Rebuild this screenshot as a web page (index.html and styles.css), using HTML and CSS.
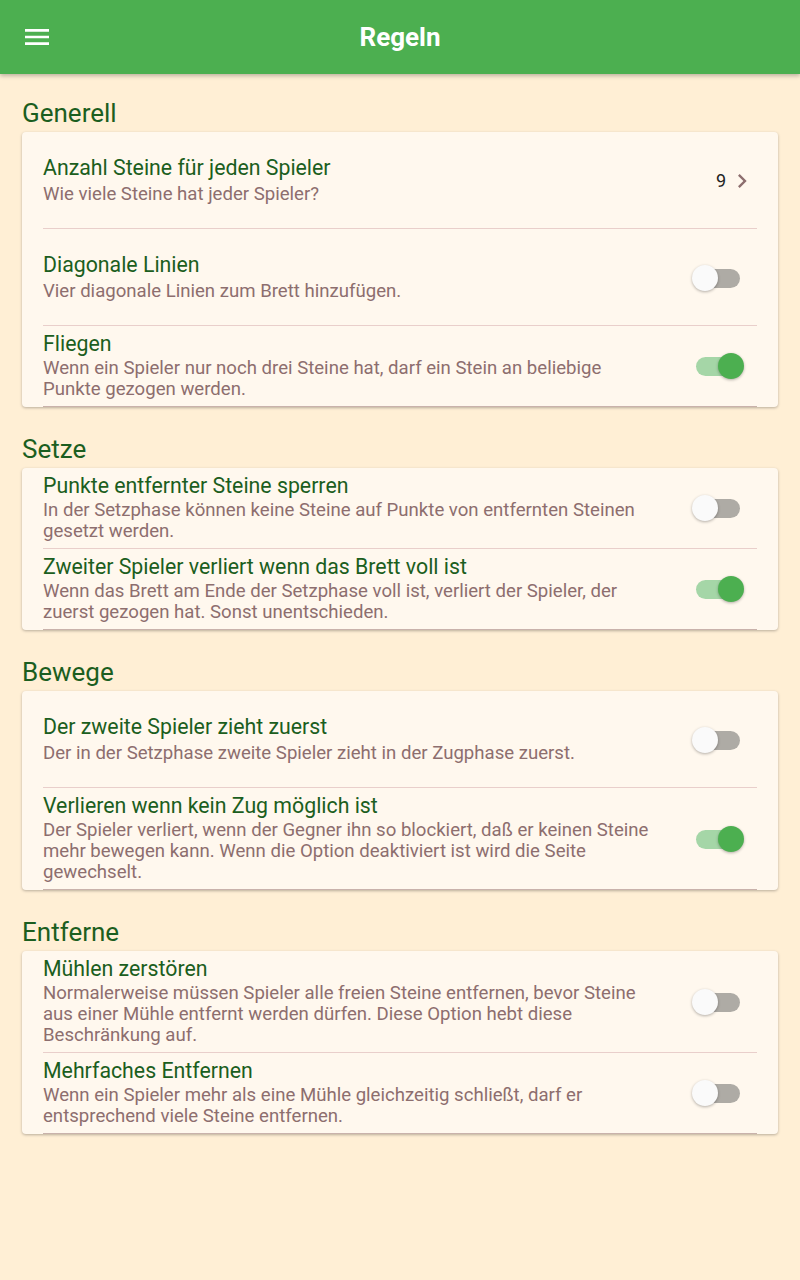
FILE: index.html
```html
<!DOCTYPE html>
<html lang="de">
<head>
<meta charset="utf-8">
<title>Regeln</title>
<link rel="stylesheet" href="styles.css">
</head>
<body>
<header class="appbar">
  <div class="appbar-lead">
    <svg class="menu-icon" viewBox="0 0 24 24" width="32" height="32"><path d="M3 18h18v-2H3v2zm0-5h18v-2H3v2zm0-7v2h18V6H3z" fill="#fff"/></svg>
  </div>
  <h1 class="appbar-title">Regeln</h1>
  <div class="appbar-trail"></div>
</header>

<main class="content">
  <h2 class="section-title first">Generell</h2>
  <section class="card">
    <div class="row single">
      <div class="text">
        <div class="title">Anzahl Steine für jeden Spieler</div>
        <div class="subtitle">Wie viele Steine hat jeder Spieler?</div>
      </div>
      <div class="trail-value">
        <span class="value">9</span>
        <svg class="chevron" viewBox="0 0 24 24" width="28" height="28"><path d="M10 6L8.59 7.41 13.17 12l-4.58 4.59L10 18l6-6z" fill="#8d6e6e"/></svg>
      </div>
    </div>
    <div class="row single">
      <div class="text">
        <div class="title">Diagonale Linien</div>
        <div class="subtitle">Vier diagonale Linien zum Brett hinzufügen.</div>
      </div>
      <div class="switch"><span class="track"></span><span class="thumb"></span></div>
    </div>
    <div class="row">
      <div class="text">
        <div class="title">Fliegen</div>
        <div class="subtitle">Wenn ein Spieler nur noch drei Steine hat, darf ein Stein an beliebige Punkte gezogen werden.</div>
      </div>
      <div class="switch on"><span class="track"></span><span class="thumb"></span></div>
    </div>
  </section>

  <h2 class="section-title">Setze</h2>
  <section class="card">
    <div class="row">
      <div class="text">
        <div class="title">Punkte entfernter Steine sperren</div>
        <div class="subtitle">In der Setzphase können keine Steine auf Punkte von entfernten Steinen gesetzt werden.</div>
      </div>
      <div class="switch"><span class="track"></span><span class="thumb"></span></div>
    </div>
    <div class="row">
      <div class="text">
        <div class="title">Zweiter Spieler verliert wenn das Brett voll ist</div>
        <div class="subtitle">Wenn das Brett am Ende der Setzphase voll ist, verliert der Spieler, der zuerst gezogen hat. Sonst unentschieden.</div>
      </div>
      <div class="switch on"><span class="track"></span><span class="thumb"></span></div>
    </div>
  </section>

  <h2 class="section-title">Bewege</h2>
  <section class="card">
    <div class="row single">
      <div class="text">
        <div class="title">Der zweite Spieler zieht zuerst</div>
        <div class="subtitle">Der in der Setzphase zweite Spieler zieht in der Zugphase zuerst.</div>
      </div>
      <div class="switch"><span class="track"></span><span class="thumb"></span></div>
    </div>
    <div class="row">
      <div class="text">
        <div class="title">Verlieren wenn kein Zug möglich ist</div>
        <div class="subtitle">Der Spieler verliert, wenn der Gegner ihn so blockiert, daß er keinen Steine mehr bewegen kann. Wenn die Option deaktiviert ist wird die Seite gewechselt.</div>
      </div>
      <div class="switch on"><span class="track"></span><span class="thumb"></span></div>
    </div>
  </section>

  <h2 class="section-title">Entferne</h2>
  <section class="card">
    <div class="row">
      <div class="text">
        <div class="title">Mühlen zerstören</div>
        <div class="subtitle">Normalerweise müssen Spieler alle freien Steine entfernen, bevor Steine aus einer Mühle entfernt werden dürfen. Diese Option hebt diese Beschränkung auf.</div>
      </div>
      <div class="switch"><span class="track"></span><span class="thumb"></span></div>
    </div>
    <div class="row">
      <div class="text">
        <div class="title">Mehrfaches Entfernen</div>
        <div class="subtitle">Wenn ein Spieler mehr als eine Mühle gleichzeitig schließt, darf er entsprechend viele Steine entfernen.</div>
      </div>
      <div class="switch"><span class="track"></span><span class="thumb"></span></div>
    </div>
  </section>
</main>
</body>
</html>
```

FILE: styles.css
```css
html, body {
  margin: 0;
  padding: 0;
}
body {
  background: #ffefd5;
  font-family: Roboto, "Noto Sans", "Liberation Sans", sans-serif;
  min-height: 1280px;
}

.appbar {
  height: 74px;
  background: #4caf50;
  display: grid;
  grid-template-columns: 1fr auto 1fr;
  align-items: center;
  box-shadow: 0 2px 4px rgba(0, 0, 0, 0.25);
  position: relative;
  z-index: 1;
}
.appbar-lead {
  padding-left: 21px;
  display: flex;
  align-items: center;
}
.menu-icon {
  display: block;
}
.appbar-title {
  margin: 0;
  color: #fff;
  font-size: 26px;
  font-weight: 700;
  line-height: 32px;
}

.content {
  padding: 0 22px 40px;
}

.section-title {
  margin: 0;
  padding-top: 26px;
  color: #1b5e20;
  font-size: 26px;
  font-weight: 400;
  line-height: 32px;
}
.section-title.first {
  padding-top: 23px;
}

.card {
  margin-top: 3px;
  background: #fff8ee;
  border-radius: 4px;
  box-shadow: 0 1px 3px rgba(0, 0, 0, 0.28);
  padding: 0 21px;
}

.row {
  display: flex;
  align-items: center;
  padding: 6px 0;
  border-bottom: 1px solid #e9cfcb;
}
.row.single {
  padding: 24px 0 23px;
}
.row:last-child {
  border-bottom-color: #c9b2ab;
}

.text {
  flex: 1;
  min-width: 0;
}
.title {
  color: #1b5e20;
  font-size: 21.3px;
  line-height: 24px;
}
.subtitle {
  margin-top: 2px;
  color: #8d6e6e;
  font-size: 18.6px;
  line-height: 21px;
}
.row.single .subtitle {
  margin-top: 4px;
}

.trail-value {
  display: flex;
  align-items: center;
  gap: 2px;
  margin-left: 16px;
  margin-right: 1px;
}
.value {
  color: #222;
  font-size: 18px;
}
.chevron {
  display: block;
}

.switch {
  position: relative;
  flex: none;
  width: 53px;
  height: 28px;
  margin-left: 35px;
  margin-right: 12px;
}
.switch .track {
  position: absolute;
  left: 4px;
  right: 5px;
  top: 5px;
  height: 19px;
  border-radius: 10px;
  background: #aeaba5;
}
.switch .thumb {
  position: absolute;
  left: 0;
  top: 1px;
  width: 26px;
  height: 26px;
  border-radius: 50%;
  background: #fafafa;
  box-shadow: 0 1px 3px rgba(0, 0, 0, 0.3);
}
.switch.on .track {
  background: #a5d6a7;
}
.switch.on .thumb {
  left: 26px;
  background: #4caf50;
}
```
